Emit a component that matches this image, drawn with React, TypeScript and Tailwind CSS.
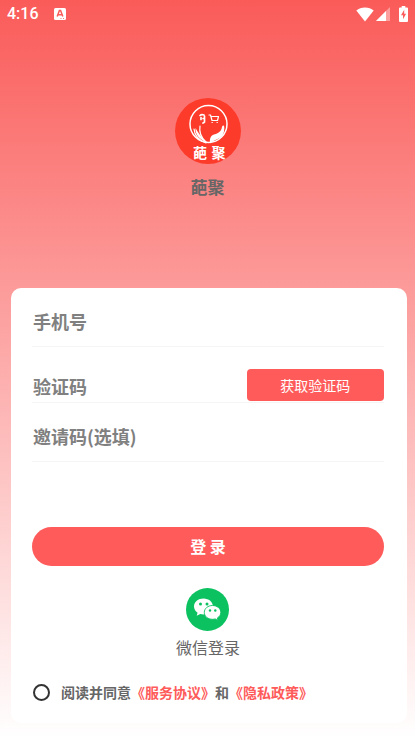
import { useState } from "react";

function StatusBar() {
  return (
    <header className="flex h-7 items-center justify-between px-[7px] text-white">
      <div className="flex items-center gap-[15px]">
        <span className="font-['Roboto',sans-serif] text-base font-medium leading-5">4:16</span>
        <svg width="12" height="12" viewBox="0 0 12 12" aria-hidden="true">
          <rect width="12" height="12" rx="1.5" fill="#fff" />
          <path d="M3.2 8.500 5.400 2.500h1.200l2.200 6M4 6.800h4" fill="none" stroke="#f95d5b" strokeWidth="1.500" />
          <path d="M6.500 10.500h1M9 10.500h1" stroke="#f95d5b" strokeWidth="0.800" />
        </svg>
      </div>
      <div className="flex items-center">
        <svg width="18" height="15" viewBox="0 0 18 15" aria-hidden="true">
          <path d="M9 14.500.300 3.600C2.600 1.600 5.600.500 9 .500s6.400 1.100 8.700 3.100z" fill="#fff" />
        </svg>
        <svg className="ml-0.5" width="14" height="14" viewBox="0 0 14 14" aria-hidden="true">
          <path d="M0 14 14 0v14z" fill="#fff" opacity="0.4" />
          <path d="M0 14 10 4v10z" fill="#fff" />
        </svg>
        <svg className="ml-[9px]" width="9" height="16" viewBox="0 0 9 16" aria-hidden="true">
          <path d="M2.700 0h3.600v1.500H8a1 1 0 0 1 1 1V15a1 1 0 0 1-1 1H1a1 1 0 0 1-1-1V2.500a1 1 0 0 1 1-1h1.700z" fill="#fff" />
          <path d="M5.200 3.800 2 9.300h2v4l3.100-5.500H5.200z" fill="#fa5d5b" />
        </svg>
      </div>
    </header>
  );
}

function BrandLogo() {
  return (
    <svg width="66" height="66" viewBox="0 0 66 66" role="img" aria-label="葩聚">
      <circle cx="33" cy="33" r="33" fill="#fd3b2a" />
      <g fill="none" stroke="#fff" strokeLinecap="round" strokeLinejoin="round">
        <circle cx="33.500" cy="26" r="18.500" strokeWidth="1.500" />
        {/* face and cart */}
        <path d="M25 17.500c1-1 2.500-1 4-.500M26 19.500v2M29.500 18v6M28 20.500h1.500M28 25l1-.500" strokeWidth="1.700" />
        <path d="M34 17h1.500l1.500 5.500h5.500l1-4H36M37 24.500h.300M42 24.500h.300" strokeWidth="1.200" />
        {/* leaves */}
        <path d="M19 31c.500 6 4.500 11 12 14M25 28c-1 6 1.500 12 6 16" strokeWidth="1.200" />
      </g>
      <path d="M20.500 30c3 5 6 9.500 10.500 14-6-2.500-11-7-10.500-14z" fill="#fff" />
      <path d="M35.500 45.500c-1.500-4 0-8 3.500-9 3.500-1 6.500-2.500 7.500-5.500.500-2 .800-3.800 2-3.500 1.200.500.800 4 .500 6-.500 3.500-3 6-6.500 7.500-3 1.200-5.500 2.500-7 4.500z" fill="#fff" />
      <g fill="#fff" fontFamily="'Noto Sans CJK SC', sans-serif" fontSize="14" fontWeight="700">
        <text x="18" y="60">葩</text>
        <text x="36.500" y="60">聚</text>
      </g>
    </svg>
  );
}

function WechatIcon() {
  return (
    <svg width="43" height="43" viewBox="0 0 43 43" aria-hidden="true">
      <circle cx="21.500" cy="21.500" r="21.500" fill="#0bc160" />
      <path d="M17.500 10.500c-5.300 0-9.500 3.500-9.500 8 0 2.600 1.400 4.700 3.600 6.200l-.9 3 3.500-1.800c1.100.3 2.100.5 3.300.5 5.300 0 9.500-3.500 9.500-7.900s-4.200-8-9.500-8z" fill="#fff" />
      <path d="M26.500 17.500c-4.600 0-8.200 3-8.200 6.900s3.600 6.900 8.200 6.900c1 0 1.900-.1 2.700-.4l2.800 1.600-.7-2.500c2.100-1.300 3.500-3.200 3.500-5.600 0-3.900-3.700-6.900-8.300-6.900z" fill="#fff" stroke="#0bc160" strokeWidth="0.900" />
      <g fill="#0bc160">
        <circle cx="14.500" cy="16" r="1.500" />
        <circle cx="21" cy="16" r="1.500" />
        <circle cx="24" cy="22.500" r="1.200" />
        <circle cx="29.300" cy="22.500" r="1.200" />
      </g>
    </svg>
  );
}

const inputClass =
  "h-7 w-full min-w-0 bg-transparent pl-px text-lg font-bold leading-7 text-[#808080] outline-none placeholder:text-[#808080] placeholder:opacity-100";

export default function App() {
  const [agreed, setAgreed] = useState(false);

  return (
    <div className="min-h-screen bg-linear-to-b/srgb from-[#fa5b59] to-white font-['Noto_Sans_CJK_SC',sans-serif]">
      <StatusBar />

      <div className="flex flex-col items-center pt-[70px]">
        <BrandLogo />
        <h1 className="mt-[11px] text-[17px] font-bold leading-6 text-[#666666]">葩聚</h1>
      </div>

      <main className="mb-[15px] ml-[11px] mr-2 mt-[89px] rounded-[10px] bg-white pb-[21px] pl-[21px] pr-[23px] pt-[19px]">
        <form onSubmit={(e) => e.preventDefault()}>
          <div className="border-b border-[#f5f5f5] pb-[11px]">
            <input className={inputClass} type="tel" aria-label="手机号" placeholder="手机号" />
          </div>
          <div className="flex items-center border-b border-[#f5f5f5] pt-[22px]">
            <input className={inputClass} type="text" aria-label="验证码" placeholder="验证码" />
            <button
              type="button"
              className="mb-px h-8 w-[39%] shrink-0 rounded bg-[#fe5b5a] text-sm leading-5 text-white"
            >
              获取验证码
            </button>
          </div>
          <div className="border-b border-[#f5f5f5] pb-[11px] pt-[19px]">
            <input className={inputClass} type="text" aria-label="邀请码(选填)" placeholder="邀请码(选填)" />
          </div>

          <button
            type="submit"
            className="mt-[65px] h-[39px] w-full rounded-full bg-[#fe5b5a] pb-0.5 text-base font-bold leading-6 text-white"
          >
            登 录
          </button>

          <button type="button" className="mx-auto mt-[22px] flex flex-col items-center gap-1">
            <WechatIcon />
            <span className="text-base leading-6 text-[#666666]">微信登录</span>
          </button>

          <div className="mt-[23px] flex items-center gap-[11px] pl-px">
            <input
              id="agree"
              type="checkbox"
              checked={agreed}
              onChange={(e) => setAgreed(e.target.checked)}
              className="size-[17px] shrink-0 appearance-none rounded-full border-2 border-[#333333] checked:bg-[#fe5b5a]"
            />
            <p className="text-sm font-bold leading-5 text-[#666666]">
              <label htmlFor="agree">阅读并同意</label>
              <a href="#terms" className="text-[#fe5b5a]">《服务协议》</a>
              和
              <a href="#privacy" className="text-[#fe5b5a]">《隐私政策》</a>
            </p>
          </div>
        </form>
      </main>
    </div>
  );
}
